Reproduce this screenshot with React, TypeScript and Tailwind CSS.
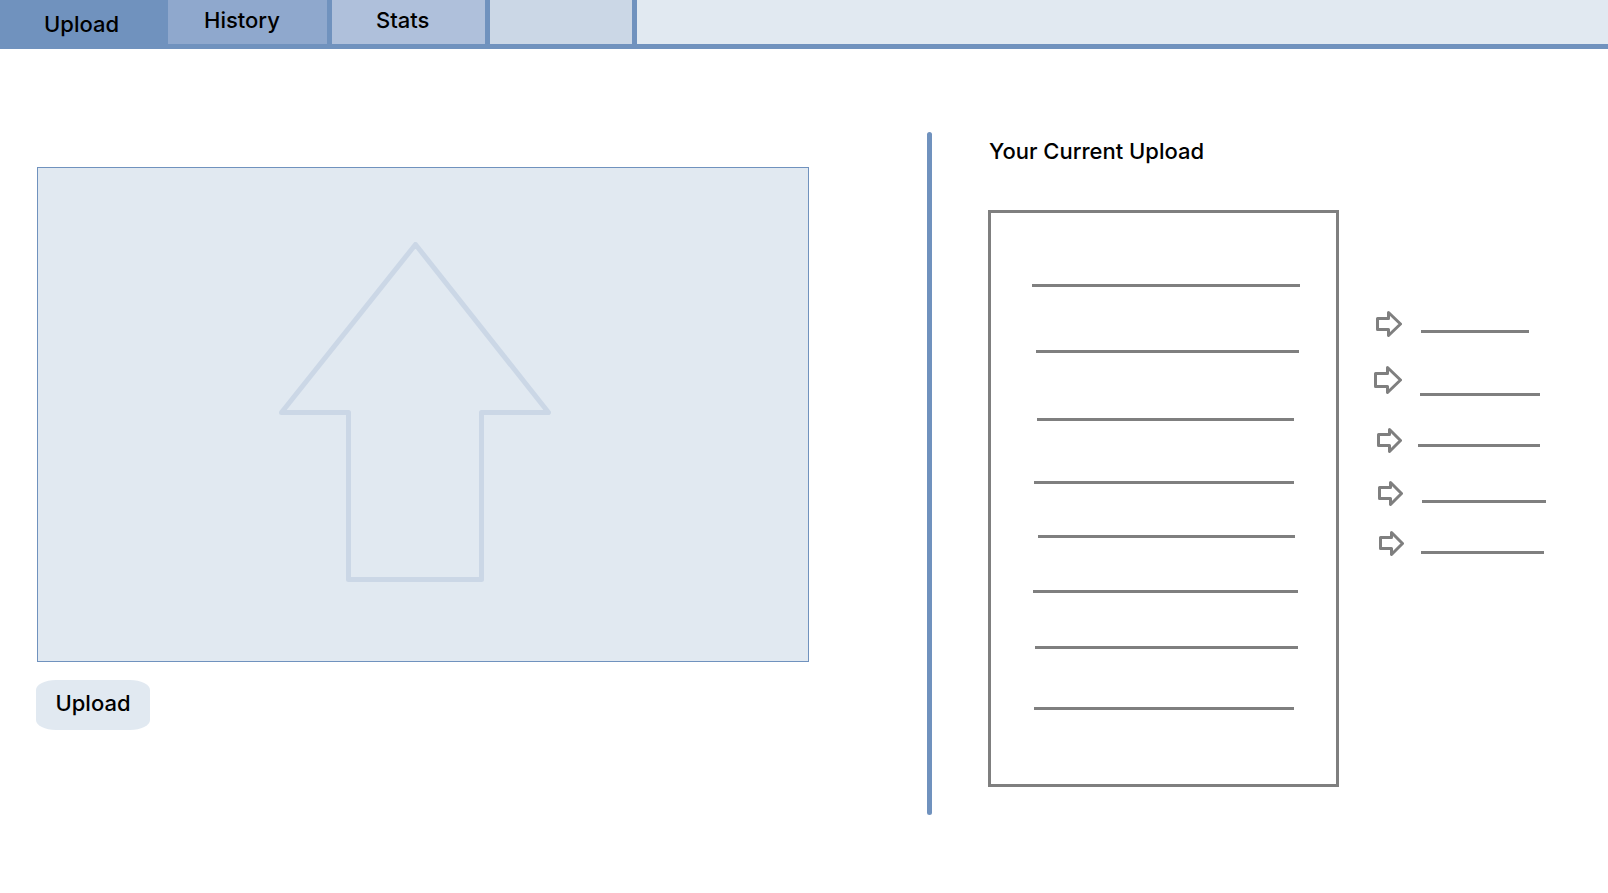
import React from "react";

const documentLines: string[] = [
  "mt-[71px] ml-[41px] mr-[36px]",
  "mt-[63px] ml-[45px] mr-[37px]",
  "mt-[65px] ml-[46px] mr-[42px]",
  "mt-[60px] ml-[43px] mr-[42px]",
  "mt-[51px] ml-[47px] mr-[41px]",
  "mt-[52px] ml-[42px] mr-[38px]",
  "mt-[53px] ml-[44px] mr-[38px]",
  "mt-[58px] ml-[43px] mr-[42px]",
];

type Note = { row: string; line: string; size: number; path: string };

const smallArrow = "M1.5 6.5H12.5V1.5L23.5 12.5L12.5 23.5V17.5H1.5Z";

const notes: Note[] = [
  {
    row: "mt-[101px] pl-[2px] gap-[19px]",
    line: "mt-[19px] w-[108px]",
    size: 26,
    path: "M1.5 7.5H12.5V1.5L24.5 13L12.5 24.5V18.5H1.5Z",
  },
  {
    row: "mt-[29px] gap-[18px]",
    line: "mt-[27px] w-[120px]",
    size: 28,
    path: "M1.5 7.5H13.5V1.5L26.5 14L13.5 26.5V20.5H1.5Z",
  },
  {
    row: "mt-[32px] pl-[3px] gap-[16px]",
    line: "mt-[16px] w-[122px]",
    size: 25,
    path: smallArrow,
  },
  {
    row: "mt-[28px] pl-[4px] gap-[19px]",
    line: "mt-[19px] w-[124px]",
    size: 25,
    path: smallArrow,
  },
  {
    row: "mt-[25px] pl-[5px] gap-[17px]",
    line: "mt-[20px] w-[123px]",
    size: 25,
    path: smallArrow,
  },
];

function TopNav() {
  return (
    <nav className="flex h-[49px] border-b-[5px] border-[#7092be] bg-[#e1e9f1]">
      <button
        type="button"
        aria-current="page"
        className="-mb-[5px] flex w-[168px] items-center bg-[#7092be] pb-0.5 pl-11"
      >
        Upload
      </button>
      <button
        type="button"
        className="flex w-[164px] items-center border-r-[5px] border-[#7092be] bg-[#8fa8cd] pb-1 pl-9"
      >
        History
      </button>
      <button
        type="button"
        className="flex w-[158px] items-center border-r-[5px] border-[#7092be] bg-[#afc0db] pb-1 pl-11"
      >
        Stats
      </button>
      <div className="w-[147px] border-r-[5px] border-[#7092be] bg-[#cbd7e6]" />
    </nav>
  );
}

function DropZone() {
  return (
    <label className="flex aspect-[772/495] w-full cursor-pointer items-center justify-center border border-[#7092be] bg-[#e1e9f1] pr-4 pb-1.5">
      <input type="file" aria-label="Choose a file" className="sr-only" />
      <svg
        viewBox="0 0 272 340"
        className="w-[272px]"
        fill="none"
        stroke="#cbd7e6"
        strokeWidth="5"
        strokeLinejoin="round"
        aria-hidden="true"
      >
        <path d="M136.5 2.5L269.5 170.5H202.5V337.5H69.5V170.5H2.5Z" />
      </svg>
    </label>
  );
}

function CurrentUpload() {
  return (
    <section className="flex pt-[83px]">
      <div className="w-[5px] shrink-0 rounded-full bg-[#7092be]" />
      <div className="flex-1 pr-[62px] pb-7 pl-14">
        <h2 className="h-[78px] pt-[5px] pl-px">Your Current Upload</h2>
        <div className="flex gap-[35px]">
          <div className="h-[577px] flex-1 border-[3px] border-[#7f7f7f]">
            <div className="flex flex-col">
              {documentLines.map((line, i) => (
                <div key={i} className={`h-[3px] bg-[#7f7f7f] ${line}`} />
              ))}
            </div>
          </div>
          <ul className="w-[172px] shrink-0">
            {notes.map((note, i) => (
              <li key={i} className={`flex items-start ${note.row}`}>
                <svg
                  width={note.size}
                  height={note.size}
                  viewBox={`0 0 ${note.size} ${note.size}`}
                  className="shrink-0"
                  fill="none"
                  stroke="#7f7f7f"
                  strokeWidth="3"
                  strokeLinejoin="round"
                  aria-hidden="true"
                >
                  <path d={note.path} />
                </svg>
                <div className={`h-[3px] shrink-0 bg-[#7f7f7f] ${note.line}`} />
              </li>
            ))}
          </ul>
        </div>
      </div>
    </section>
  );
}

export default function App() {
  return (
    <div className="min-h-screen bg-white font-['Inter',sans-serif] text-[22px] leading-[28px] font-medium text-black">
      <TopNav />
      <main className="grid grid-cols-[927fr_681fr]">
        <section className="pt-[118px] pr-[118px] pl-[37px]">
          <DropZone />
          <button
            type="button"
            className="mt-[18px] -ml-px h-[50px] w-[114px] rounded-[20px_/_10px] bg-[#e1e9f1] pb-1"
          >
            Upload
          </button>
        </section>
        <CurrentUpload />
      </main>
    </div>
  );
}
